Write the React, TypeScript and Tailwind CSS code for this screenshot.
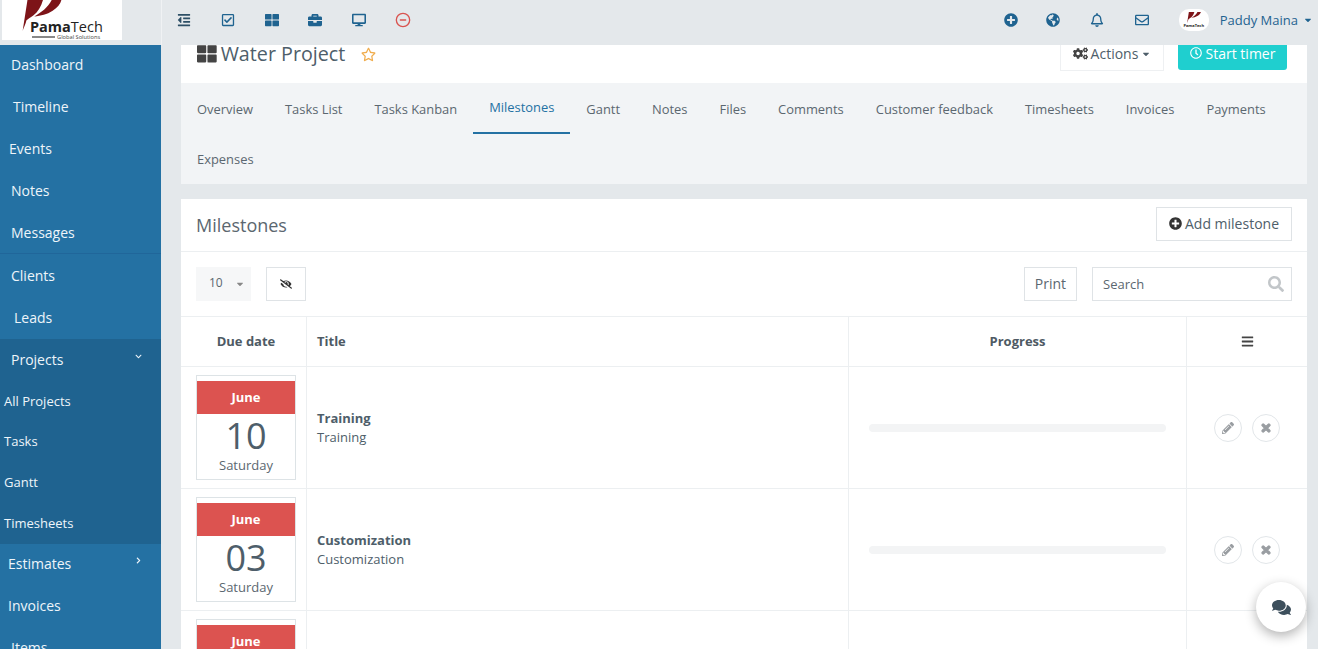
import React from "react";
import {
  FaBars,
  FaBriefcase,
  FaCaretDown,
  FaChevronDown,
  FaChevronRight,
  FaCogs,
  FaComments,
  FaDesktop,
  FaEyeSlash,
  FaGlobeAmericas,
  FaOutdent,
  FaPencilAlt,
  FaPlusCircle,
  FaRegBell,
  FaRegCheckSquare,
  FaRegClock,
  FaRegEnvelope,
  FaRegStar,
  FaSearch,
  FaThLarge,
  FaTimes,
} from "react-icons/fa";
import { CircleMinus } from "lucide-react";

const tabs = [
  "Overview",
  "Tasks List",
  "Tasks Kanban",
  "Milestones",
  "Gantt",
  "Notes",
  "Files",
  "Comments",
  "Customer feedback",
  "Timesheets",
  "Invoices",
  "Payments",
  "Expenses",
];

const milestones = [
  { day: "10", weekday: "Saturday", title: "Training" },
  { day: "03", weekday: "Saturday", title: "Customization" },
];

function LogoMark({ className }: { className: string }) {
  return (
    <svg viewBox="0 0 40 32" className={className}>
      <path d="M0 32 L5 0 L21 0 C19 7 16 12 11 16 C8 18 5 20 4 21 C3 25 1 29 0 32 Z" fill="#7d1418" />
      <path d="M30 0 L40 0 C39 4 36 8 31 11 C25 15 19 16 12 17 C19 13 26 8 30 0 Z" fill="#7d1418" />
    </svg>
  );
}

function SideLink({ label, className, right }: { label: string; className: string; right?: React.ReactNode }) {
  return (
    <div className={`flex h-[42px] items-center text-[14px] text-[#eef5fa] ${className}`}>
      <span>{label}</span>
      {right}
    </div>
  );
}

function SubLink({ label }: { label: string }) {
  return <div className="flex h-[40.7px] items-center pl-[4px] text-[13px] text-[#eef5fa]">{label}</div>;
}

function Sidebar() {
  return (
    <aside className="w-[161px] shrink-0 overflow-hidden bg-[#2471a3]">
      <div className="-mt-[2px] border-b border-[#20669a]">
        <SideLink label="Dashboard" className="pl-[11px]" />
        <SideLink label="Timeline" className="pl-[13px]" />
        <SideLink label="Events" className="pl-[9px]" />
        <SideLink label="Notes" className="pl-[11px]" />
        <SideLink label="Messages" className="pl-[11px]" />
      </div>
      <SideLink label="Clients" className="pl-[11px]" />
      <SideLink label="Leads" className="pl-[14px]" />
      <div className="mt-px h-[205px] overflow-hidden bg-[#1f6390]">
        <SideLink
          label="Projects"
          className="-mt-px pl-[11px]"
          right={<FaChevronDown className="mb-[6px] ml-auto mr-[19px] text-[7px]" />}
        />
        <div className="pt-px">
          <SubLink label="All Projects" />
          <SubLink label="Tasks" />
          <SubLink label="Gantt" />
          <SubLink label="Timesheets" />
        </div>
      </div>
      <SideLink
        label="Estimates"
        className="-mt-[2px] pl-[8px]"
        right={<FaChevronRight className="mb-[6px] ml-auto mr-[19px] text-[7px]" />}
      />
      <SideLink label="Invoices" className="pl-[8px]" />
      <SideLink label="Items" className="pl-[11px]" />
    </aside>
  );
}

function TopBar() {
  return (
    <header className="flex h-[45px] shrink-0 bg-[#e4e8eb]">
      <div className="w-[162px] shrink-0 border-r border-[#f0f2f4] pl-[2px]">
        <div className="h-[40px] w-[120px] overflow-hidden bg-white pl-[20px]">
          <LogoMark className="h-[31px] w-[40px]" />
          <div className="-mt-[10px] ml-[8px] text-[14.5px] leading-[12px] text-[#222]">
            <span className="font-bold">Pama</span>Tech
          </div>
          <div className="ml-[10px] mt-px flex items-center text-[5.7px] leading-[6px] text-[#444]">
            <div className="mr-[2px] h-[2px] w-[23px] bg-[#888]" />
            <span>Global Solutions</span>
          </div>
        </div>
      </div>
      <div className="flex flex-1 items-center pb-[5px] pl-[15px] text-[14px] text-[#1f6390]">
        <FaOutdent className="text-[#2d4f66]" />
        <FaRegCheckSquare className="ml-[30px]" />
        <FaThLarge className="ml-[30px]" />
        <FaBriefcase className="ml-[29px]" />
        <FaDesktop className="ml-[30px]" />
        <CircleMinus className="ml-[29px] h-[16px] w-[16px] text-[#d9534f]" strokeWidth={2} />
        <div className="ml-auto flex items-center">
          <FaPlusCircle />
          <FaGlobeAmericas className="ml-[28px]" />
          <FaRegBell className="ml-[30px]" />
          <FaRegEnvelope className="ml-[31px]" />
          <div className="ml-[30px] flex h-[22px] w-[30px] flex-col items-center justify-center rounded-[10px] bg-white">
            <LogoMark className="h-[11px] w-[14px]" />
            <span className="text-[4px] font-bold leading-[5px] text-[#222]">PamaTech</span>
          </div>
          <span className="ml-[11px] pt-px text-[13px]">Paddy Maina</span>
          <FaCaretDown className="ml-[5px] mr-[5px] text-[10px]" />
        </div>
      </div>
    </header>
  );
}

function MilestoneRow({ day, weekday, title }: { day: string; weekday: string; title: string }) {
  return (
    <div className="grid h-[122px] grid-cols-[126px_542px_338px_120px] border-b border-[#eceff1]">
      <div className="border-r border-[#eceff1] pl-[15px] pt-[8px]">
        <div className="h-[105px] w-[100px] border border-[#dde3e6] pt-[5px] text-center">
          <div className="flex h-[33px] items-center justify-center bg-[#dc5350] text-[13px] font-bold text-white">
            June
          </div>
          <div className="mt-[1px] text-[36px] leading-[42px] text-[#4e5e6a]">{day}</div>
          <div className="text-[13px] leading-[17px] text-[#5b6770]">{weekday}</div>
        </div>
      </div>
      <div className="flex flex-col justify-center border-r border-[#eceff1] pl-[10px] text-[13px] leading-[19px] text-[#4e5e6a]">
        <div className="font-bold">{title}</div>
        <div>{title}</div>
      </div>
      <div className="flex items-center justify-center border-r border-[#eceff1]">
        <div className="h-[8px] w-[297px] rounded-full bg-[#f3f4f5]" />
      </div>
      <div className="flex items-center gap-[10px] pl-[27px] text-[12px] text-[#999da1]">
        <div className="flex h-[28px] w-[28px] items-center justify-center rounded-full border border-[#e2e6e9]">
          <FaPencilAlt />
        </div>
        <div className="flex h-[28px] w-[28px] items-center justify-center rounded-full border border-[#e2e6e9]">
          <FaTimes stroke="currentColor" strokeWidth={50} />
        </div>
      </div>
    </div>
  );
}

export default function App() {
  return (
    <div className="relative flex h-[649px] flex-col overflow-hidden bg-[#e4e8eb] font-['Open_Sans',sans-serif]">
      <TopBar />
      <div className="flex min-h-0 flex-1">
        <Sidebar />
        <main className="min-w-0 flex-1 pl-[20px] pr-[11px]">
          <div className="flex h-[38px] bg-white pl-[16px] pr-[20px]">
            <div className="flex h-[18px] items-center text-[19.7px] leading-[18px] text-[#4e5e6a]">
              <FaThLarge className="mr-[4px] text-[#444]" />
              <span>Water Project</span>
              <FaRegStar className="ml-[16px] text-[15px] text-[#f0ad4e]" />
            </div>
            <div className="ml-auto flex items-start">
              <div className="flex h-[26px] w-[104px] items-center justify-center gap-[3px] border border-t-0 border-[#eef0f2] pb-[8px] text-[14px] text-[#4e5e6a]">
                <FaCogs className="text-[15px] text-[#444]" />
                Actions
                <FaCaretDown className="text-[10px]" />
              </div>
              <div className="ml-[14px] flex h-[25px] w-[109px] items-center justify-center gap-[4px] rounded-b-[3px] bg-[#1fcfcf] pb-[9px] text-[14px] text-white">
                <FaRegClock className="text-[12px]" />
                Start timer
              </div>
            </div>
          </div>

          <nav className="flex h-[101px] flex-wrap content-start bg-[#f2f4f6] pt-px text-[12.92px] text-[#5b6770]">
            {tabs.map((tab) => (
              <div
                key={tab}
                className={
                  tab === "Milestones"
                    ? "flex h-[50px] items-center border-b-2 border-[#2471a3] px-[16px] text-[#2471a3]"
                    : "flex h-[50px] items-center px-[16px] pt-[2px]"
                }
              >
                {tab}
              </div>
            ))}
          </nav>

          <section className="mt-[15px] bg-white">
            <div className="flex h-[53px] items-center border-b border-[#eceff1] pl-[15px] pr-[15px]">
              <h4 className="text-[18px] text-[#5b6770]">Milestones</h4>
              <div className="-mt-[3px] ml-auto flex h-[34px] w-[136px] items-center justify-center gap-[3px] border border-[#dfe3e6] text-[14px] text-[#4e5e6a]">
                <FaPlusCircle className="text-[13px] text-[#333]" />
                Add milestone
              </div>
            </div>

            <div className="flex h-[65px] items-center border-b border-[#eceff1] pl-[15px] pr-[15px] text-[14px] text-[#5b6770]">
              <div className="flex h-[34px] w-[55px] items-center bg-[#f6f7f8] pb-[2px] pl-[13px] text-[12px]">
                10
                <FaCaretDown className="ml-[12px] mt-[2px] text-[10px] text-[#888]" />
              </div>
              <div className="ml-[15px] flex h-[34px] w-[40px] items-center justify-center border border-[#dfe3e6] text-[12px] text-[#333]">
                <FaEyeSlash />
              </div>
              <div className="ml-auto flex h-[34px] w-[53px] items-center justify-center border border-[#dfe3e6] pb-px">
                Print
              </div>
              <div className="ml-[15px] flex h-[34px] w-[200px] items-center justify-between border border-[#dfe3e6] pl-[10px] pr-[7px]">
                <span className="pt-px text-[13px]">Search</span>
                <FaSearch className="text-[16px] text-[#c2c6c9]" />
              </div>
            </div>

            <div className="grid h-[50px] grid-cols-[126px_542px_338px_120px] border-b border-[#eceff1] text-[13px] font-bold text-[#4e5a64]">
              <div className="flex items-center justify-center border-r border-[#eceff1] pl-[5px]">Due date</div>
              <div className="flex items-center border-r border-[#eceff1] pl-[10px]">Title</div>
              <div className="flex items-center justify-center border-r border-[#eceff1]">Progress</div>
              <div className="flex items-center justify-center text-[#444]">
                <FaBars />
              </div>
            </div>

            {milestones.map((m) => (
              <MilestoneRow key={m.day} {...m} />
            ))}

            <div className="grid h-[60px] grid-cols-[126px_542px_338px_120px]">
              <div className="border-r border-[#eceff1] pl-[15px] pt-[8px]">
                <div className="h-[60px] w-[100px] border border-[#dde3e6] pt-[5px] text-center">
                  <div className="flex h-[33px] items-center justify-center bg-[#dc5350] text-[13px] font-bold text-white">
                    June
                  </div>
                </div>
              </div>
              <div className="border-r border-[#eceff1]" />
              <div className="border-r border-[#eceff1]" />
            </div>
          </section>
        </main>
      </div>

      <div className="absolute left-[1256px] top-[582px] flex h-[50px] w-[50px] items-center justify-center rounded-full bg-white text-[19px] text-[#3d4f5c] shadow-[0_4px_12px_rgba(0,0,0,0.3)]">
        <FaComments />
      </div>
    </div>
  );
}
